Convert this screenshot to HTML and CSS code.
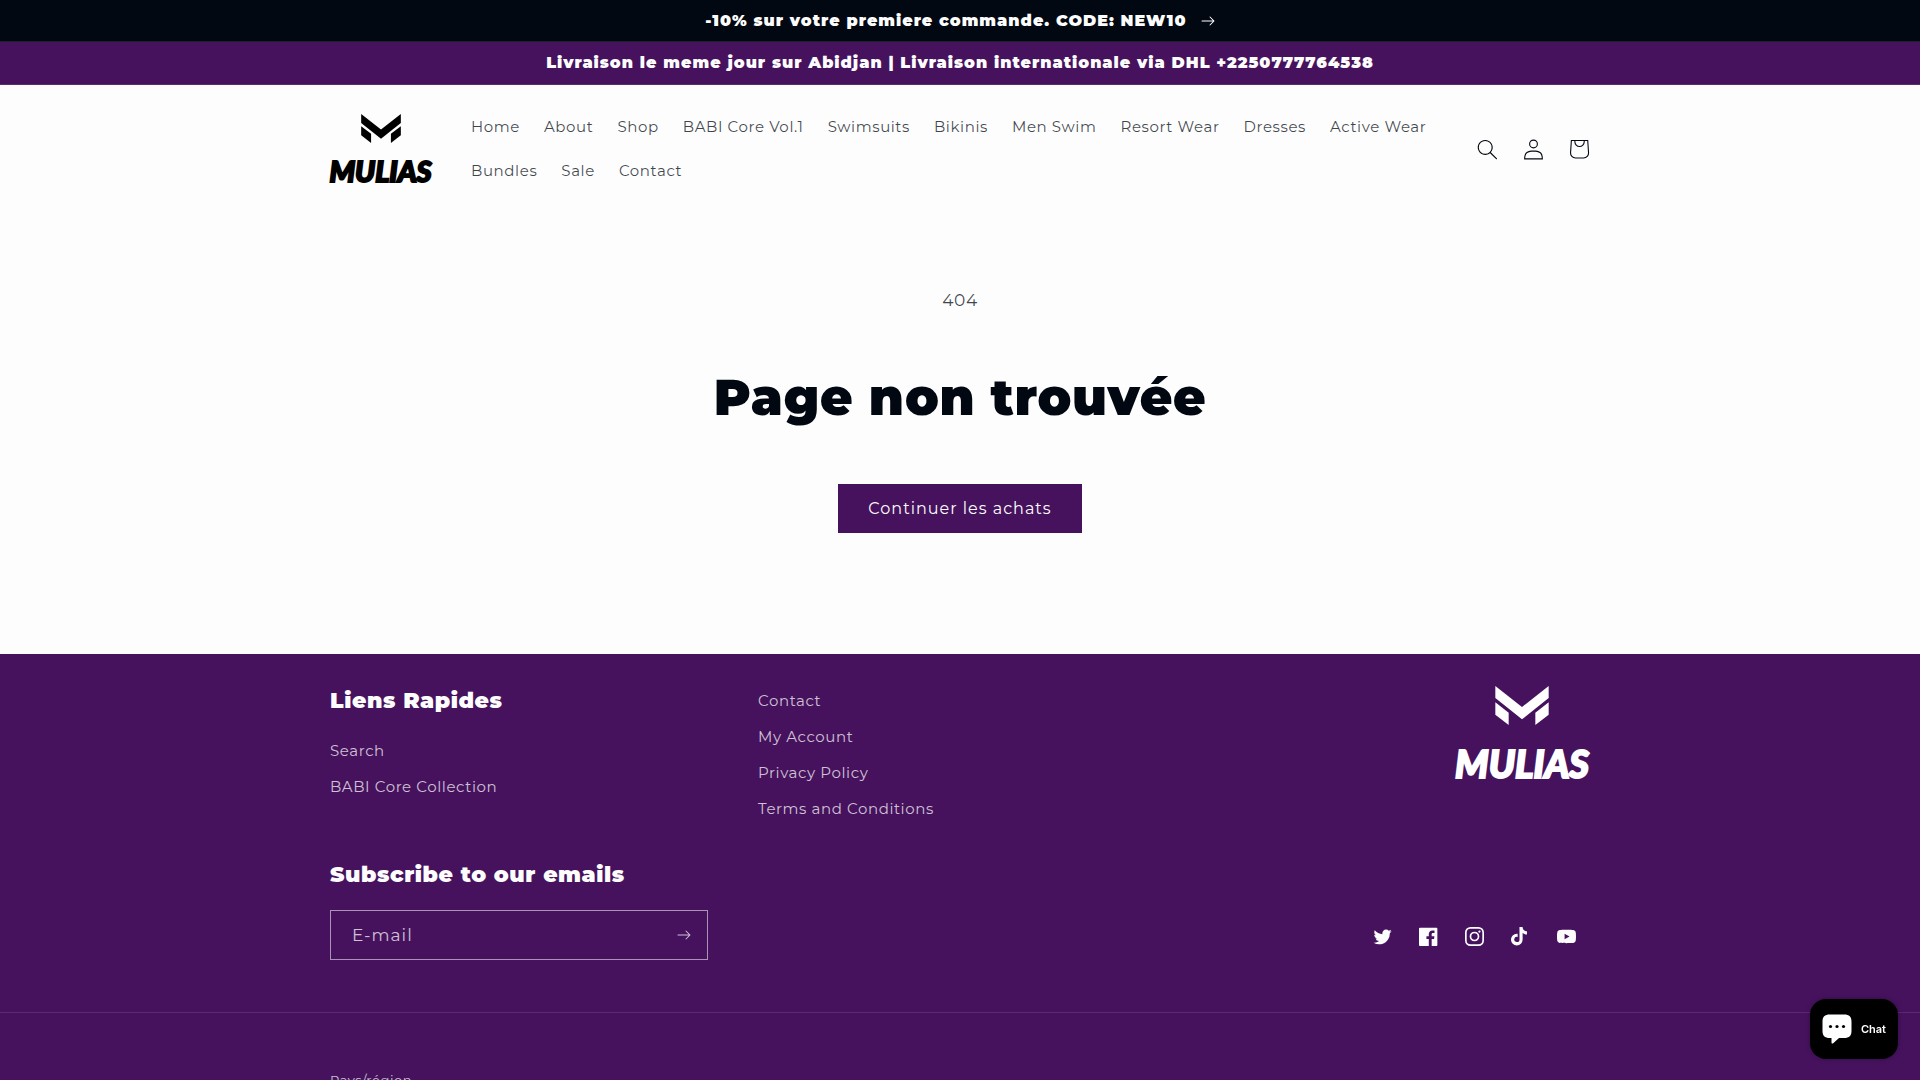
FILE: index.html
```html
<!DOCTYPE html>
<html lang="fr">
  <head>
    <meta charset="UTF-8" />
    <meta name="viewport" content="width=device-width, initial-scale=1.0" />
    <title>Page non trouvée – MULIAS</title>
    <link rel="stylesheet" href="styles.css">
  </head>
  <body>
    <a class="announcement announcement--dark" href="#">
      <span>-10% sur votre premiere commande. CODE: NEW10</span>
      <svg class="icon-arrow" viewBox="0 0 14 10" aria-hidden="true"><path d="M8.537.808a.5.5 0 01.817-.162l4 4a.5.5 0 010 .708l-4 4a.5.5 0 11-.708-.708L11.793 5.5H1a.5.5 0 010-1h10.793L8.646 1.354a.5.5 0 01-.109-.546z" /></svg>
    </a>
    <p class="announcement">Livraison le meme jour sur Abidjan | Livraison internationale via DHL +2250777764538</p>

    <header class="header page-width">
      <a class="logo" href="#">
        <svg class="logo__mark" viewBox="0 0 160 117" aria-hidden="true"><path d="M0 0l80 63 80-63v36l-80 64L0 36zM0 49l40 31v37L0 86zM160 49l-40 31v37l40-31z" /></svg>
        <span class="logo__name">MULIAS</span>
      </a>
      <nav class="nav">
        <a class="nav__link" href="#">Home</a>
        <a class="nav__link" href="#">About</a>
        <a class="nav__link" href="#">Shop</a>
        <a class="nav__link" href="#">BABI Core Vol.1</a>
        <a class="nav__link" href="#">Swimsuits</a>
        <a class="nav__link" href="#">Bikinis</a>
        <a class="nav__link" href="#">Men Swim</a>
        <a class="nav__link" href="#">Resort Wear</a>
        <a class="nav__link" href="#">Dresses</a>
        <a class="nav__link" href="#">Active Wear</a>
        <a class="nav__link" href="#">Bundles</a>
        <a class="nav__link" href="#">Sale</a>
        <a class="nav__link" href="#">Contact</a>
      </nav>
      <div class="header__icons">
        <button class="header__icon" type="button" aria-label="Recherche">
          <svg class="icon" viewBox="0 0 18 19"><path fill-rule="evenodd" d="M11.03 11.68A5.784 5.784 0 112.85 3.5a5.784 5.784 0 018.18 8.18zm.26 1.12a6.78 6.78 0 11.72-.7l5.4 5.4a.5.5 0 11-.71.7l-5.41-5.4z" /></svg>
        </button>
        <a class="header__icon" href="#" aria-label="Connexion">
          <svg class="icon" viewBox="0 0 18 19"><path fill-rule="evenodd" d="M6 4.5a3 3 0 116 0 3 3 0 01-6 0zm3-4a4 4 0 100 8 4 4 0 000-8zm5.58 12.15c1.12.82 1.83 2.24 1.91 4.85H1.51c.08-2.6.79-4.03 1.9-4.85C4.66 11.75 6.5 11.5 9 11.5s4.35.26 5.58 1.15zM9 10.5c-2.5 0-4.65.24-6.17 1.35C1.27 12.98.5 14.93.5 18v.5h17V18c0-3.07-.77-5.02-2.33-6.15-1.52-1.1-3.67-1.35-6.17-1.35z" /></svg>
        </a>
        <a class="header__icon" href="#" aria-label="Panier">
          <svg class="icon icon--cart" viewBox="0 0 40 40"><path fill-rule="evenodd" d="M15.75 11.8h-3.16l-.77 11.6a5 5 0 0 0 4.99 5.34h7.38a5 5 0 0 0 4.99-5.33L28.4 11.8zm0 1h-2.22l-.71 10.67a4 4 0 0 0 3.99 4.27h7.38a4 4 0 0 0 4-4.27l-.72-10.67h-2.22v.63a4.75 4.75 0 1 1-9.5 0zm8.5 0h-7.5v.63a3.75 3.75 0 1 0 7.5 0z" /></svg>
        </a>
      </div>
    </header>

    <main class="not-found">
      <p class="not-found__code">404</p>
      <h1 class="not-found__title">Page non trouvée</h1>
      <a class="button" href="#">Continuer les achats</a>
    </main>

    <footer class="footer">
      <div class="footer__top page-width">
        <div class="footer__blocks">
          <div>
            <h2 class="footer__heading">Liens Rapides</h2>
            <ul class="footer__list">
              <li><a class="footer__link" href="#">Search</a></li>
              <li><a class="footer__link" href="#">BABI Core Collection</a></li>
            </ul>
          </div>
          <ul class="footer__list">
            <li><a class="footer__link" href="#">Contact</a></li>
            <li><a class="footer__link" href="#">My Account</a></li>
            <li><a class="footer__link" href="#">Privacy Policy</a></li>
            <li><a class="footer__link" href="#">Terms and Conditions</a></li>
          </ul>
          <div class="logo logo--footer">
            <svg class="logo__mark" viewBox="0 0 160 117" aria-hidden="true"><path d="M0 0l80 63 80-63v36l-80 64L0 36zM0 49l40 31v37L0 86zM160 49l-40 31v37l40-31z" /></svg>
            <span class="logo__name">MULIAS</span>
          </div>
        </div>

        <div class="footer__contact">
          <form class="newsletter">
            <h2 class="footer__heading"><label for="email">Subscribe to our emails</label></h2>
            <div class="newsletter__field">
              <input class="newsletter__input" id="email" type="email" placeholder="E-mail" />
              <button class="newsletter__button" type="submit" aria-label="S'inscrire">
                <svg class="icon-arrow" viewBox="0 0 14 10"><path d="M8.537.808a.5.5 0 01.817-.162l4 4a.5.5 0 010 .708l-4 4a.5.5 0 11-.708-.708L11.793 5.5H1a.5.5 0 010-1h10.793L8.646 1.354a.5.5 0 01-.109-.546z" /></svg>
              </button>
            </div>
          </form>
          <div class="social">
            <a class="social__link" href="#" aria-label="Twitter">
              <svg class="social__icon" viewBox="0 0 18 15"><path d="M17.64 2.6a7.33 7.33 0 01-1.75 1.82c0 .05 0 .13.02.23l.02.23a9.97 9.97 0 01-1.69 5.54c-.57.85-1.24 1.62-2.02 2.28a9.09 9.09 0 01-2.82 1.6 10.23 10.23 0 01-8.9-.98c.34.02.61.04.83.04 1.64 0 3.1-.5 4.38-1.5a3.6 3.6 0 01-3.3-2.45A2.91 2.91 0 004 9.35a3.47 3.47 0 01-2.02-1.21 3.37 3.37 0 01-.8-2.22v-.03c.46.24.98.37 1.58.4a3.45 3.45 0 01-1.54-2.9c0-.61.14-1.2.45-1.79a9.68 9.68 0 003.2 2.6 10 10 0 004.08 1.07 3 3 0 01-.13-.8c0-.97.34-1.8 1.03-2.48A3.45 3.45 0 0112.4.96a3.49 3.49 0 012.54 1.1c.8-.15 1.54-.44 2.23-.85a3.4 3.4 0 01-1.54 1.94c.74-.1 1.4-.28 2.01-.54z" /></svg>
            </a>
            <a class="social__link" href="#" aria-label="Facebook">
              <svg class="social__icon" viewBox="0 0 18 18"><path d="M16.42.61c.27 0 .5.1.69.28.19.2.28.42.28.7v15.44c0 .27-.1.5-.28.69a.94.94 0 01-.7.28h-4.39v-6.7h2.25l.31-2.65h-2.56v-1.7c0-.4.1-.72.28-.93.18-.2.5-.32 1-.32h1.37V3.35c-.6-.06-1.27-.1-2.01-.1-1.01 0-1.83.3-2.45.9-.62.6-.93 1.44-.93 2.53v1.97H7.04v2.65h2.24V18H.98c-.28 0-.5-.1-.7-.28a.94.94 0 01-.28-.7V1.59c0-.27.1-.5.28-.69a.94.94 0 01.7-.28h15.44z" /></svg>
            </a>
            <a class="social__link" href="#" aria-label="Instagram">
              <svg class="social__icon" viewBox="0 0 18 18"><rect class="line" x=".8" y=".8" width="16.4" height="16.4" rx="4.4" /><circle class="line" cx="9" cy="9" r="3.8" /><circle cx="13.7" cy="4.3" r="1.1" /></svg>
            </a>
            <a class="social__link" href="#" aria-label="TikTok">
              <svg class="social__icon" viewBox="0 0 18 18"><path d="M8.02 0H11s-.17 3.82 4.13 4.1v2.95s-2.3.14-4.13-1.26l.03 6.1a5.52 5.52 0 11-5.51-5.52h.77V9.4a2.5 2.5 0 101.76 2.4L8.02 0z" /></svg>
            </a>
            <a class="social__link" href="#" aria-label="YouTube">
              <svg class="social__icon" viewBox="0 0 100 70"><path d="M98 11c2 7.7 2 24 2 24s0 16.3-2 24a12.5 12.5 0 01-9 9c-7.7 2-39 2-39 2s-31.3 0-39-2a12.5 12.5 0 01-9-9c-2-7.7-2-24-2-24s0-16.3 2-24c1.2-4.4 4.6-7.8 9-9 7.7-2 39-2 39-2s31.3 0 39 2c4.4 1.2 7.8 4.6 9 9zM40 50l26-15-26-15v30z" /></svg>
            </a>
          </div>
        </div>
      </div>

      <div class="footer__bottom">
        <div class="page-width">
          <p class="footer__caption">Pays/région</p>
        </div>
      </div>
    </footer>

    <button class="chat" type="button">
      <svg class="chat__icon" viewBox="0 0 30 30" aria-hidden="true"><path d="M8 .5h14c5.500 0 7.500 2 7.500 7.500v8.500c0 5.500-2 7.500-7.500 7.500h-5l-5.800 5.200c-.9.800-1.700.400-1.700-.7V24H8C2.500 24 .5 22 .5 16.500V8C.5 2.500 2.500.5 8 .5z" /><g class="chat__dots"><circle cx="8.500" cy="12.500" r="1.600" /><circle cx="15" cy="12.500" r="1.600" /><circle cx="21.500" cy="12.500" r="1.600" /></g></svg>
      <span>Chat</span>
    </button>
  </body>
</html>
```

FILE: styles.css
```css
* {
  margin: 0;
  padding: 0;
  box-sizing: border-box;
}

body {
  font-family: Montserrat, Inter, sans-serif;
  font-size: 15px;
  line-height: 20px;
  letter-spacing: 0.6px;
  color: rgba(2, 8, 18, 0.75);
  background-color: #fdfdfd;
}

a {
  color: inherit;
  text-decoration: none;
}

ul {
  list-style: none;
}

button,
input {
  font: inherit;
  letter-spacing: inherit;
  color: inherit;
  background: none;
  border: none;
}

button {
  cursor: pointer;
}

svg {
  display: block;
  fill: currentColor;
}

.page-width {
  max-width: 1360px;
  margin: 0 auto;
  padding: 0 50px;
}

/* announcement bars */
.announcement {
  display: flex;
  align-items: center;
  justify-content: center;
  gap: 14px;
  padding: 10px 20px;
  border-bottom: 1px solid #5a2b6f;
  font-size: 16px;
  line-height: 22px;
  font-weight: 900;
  letter-spacing: 1px;
  color: #fdfdfd;
  background-color: #46125e;
}

.announcement--dark {
  line-height: 21px;
  border-color: #1b202a;
  background-color: #020812;
}

.icon-arrow {
  width: 14px;
  height: 10px;
}

/* header */
.header {
  display: grid;
  grid-template-columns: auto 1fr auto;
  align-items: center;
  padding-top: 20px;
  padding-bottom: 20px;
}

.logo {
  display: flex;
  flex-direction: column;
  align-items: center;
  gap: 14px;
  width: 101px;
  color: #000;
}

.logo__mark {
  width: 40px;
  height: 29px;
}

.logo__name {
  font-family: Lato, sans-serif;
  font-size: 29px;
  line-height: 28px;
  font-weight: 900;
  font-style: italic;
  letter-spacing: 0;
  -webkit-text-stroke: 2px currentColor;
}

.nav {
  display: flex;
  flex-wrap: wrap;
  margin-left: 28px;
}

.nav__link {
  padding: 12px;
}

.header__icons {
  display: flex;
  gap: 2px;
  margin-right: -11px;
  color: #020812;
}

.header__icon {
  display: flex;
  align-items: center;
  justify-content: center;
  width: 44px;
  height: 44px;
}

.icon {
  width: 21px;
  height: 21px;
}

.icon--cart {
  width: 44px;
  height: 44px;
}

/* 404 */
.not-found {
  display: flex;
  flex-direction: column;
  align-items: center;
  padding: 77px 50px 121px;
  text-align: center;
}

.not-found__code {
  font-size: 17px;
  line-height: 20px;
}

.not-found__title {
  margin: 54px 0 52px;
  font-size: 50px;
  line-height: 68px;
  font-weight: 900;
  color: #020812;
}

.button {
  padding: 14px 30px;
  font-size: 16px;
  line-height: 21px;
  letter-spacing: 1px;
  color: #fdfdfd;
  background-color: #46125e;
}

/* footer */
.footer {
  color: rgba(253, 253, 253, 0.75);
  background-color: #46125e;
}

.footer__top {
  padding-top: 32px;
  padding-bottom: 52px;
}

.footer__blocks {
  display: grid;
  grid-template-columns: repeat(3, 1fr);
  column-gap: 24px;
}

.footer__heading {
  margin-bottom: 20px;
  font-size: 22px;
  line-height: 30px;
  font-weight: 900;
  color: #fdfdfd;
}

.footer__list {
  margin-top: -3px;
}

.footer__link {
  display: block;
  padding: 8px 0;
}

.logo--footer {
  justify-self: end;
  gap: 18px;
  width: 136px;
  color: #fff;
}

.logo--footer .logo__mark {
  width: 54px;
  height: 39px;
}

.logo--footer .logo__name {
  font-size: 38px;
  line-height: 40px;
}

.footer__contact {
  display: flex;
  align-items: flex-end;
  justify-content: space-between;
  margin-top: 33px;
}

.newsletter {
  width: 30%;
}

.newsletter__field {
  display: flex;
  border: 1px solid rgba(253, 253, 253, 0.55);
}

.newsletter__input {
  flex: 1;
  min-width: 0;
  padding: 14px 21px;
  font-size: 17px;
  line-height: 20px;
  letter-spacing: 1px;
  outline: none;
}

.newsletter__input::placeholder {
  color: inherit;
}

.newsletter__button {
  padding: 0 16px;
}

.social {
  display: flex;
  gap: 2px;
  padding: 0 2px 2px 0;
}

.social__link {
  display: flex;
  align-items: center;
  justify-content: center;
  width: 44px;
  height: 44px;
  color: #fdfdfd;
}

.social__icon {
  width: 19px;
  height: 19px;
}

.line {
  fill: none;
  stroke: currentColor;
  stroke-width: 1.6;
}

.footer__bottom {
  padding: 55px 0;
  border-top: 1px solid #582a6e;
}

.footer__caption {
  font-size: 13px;
  line-height: 24px;
}

/* chat bubble, stays over the page */
.chat {
  position: fixed;
  right: 22px;
  bottom: 21px;
  display: flex;
  align-items: center;
  gap: 9px;
  padding: 15px 12px;
  border-radius: 16px;
  font-family: Inter, sans-serif;
  font-size: 11px;
  font-weight: 600;
  letter-spacing: 0;
  color: #fff;
  background-color: #000;
  box-shadow: 0 0 5px rgba(0, 0, 0, 0.3);
}

.chat__icon {
  width: 30px;
  height: 30px;
}

.chat__dots {
  fill: #000;
}
```
